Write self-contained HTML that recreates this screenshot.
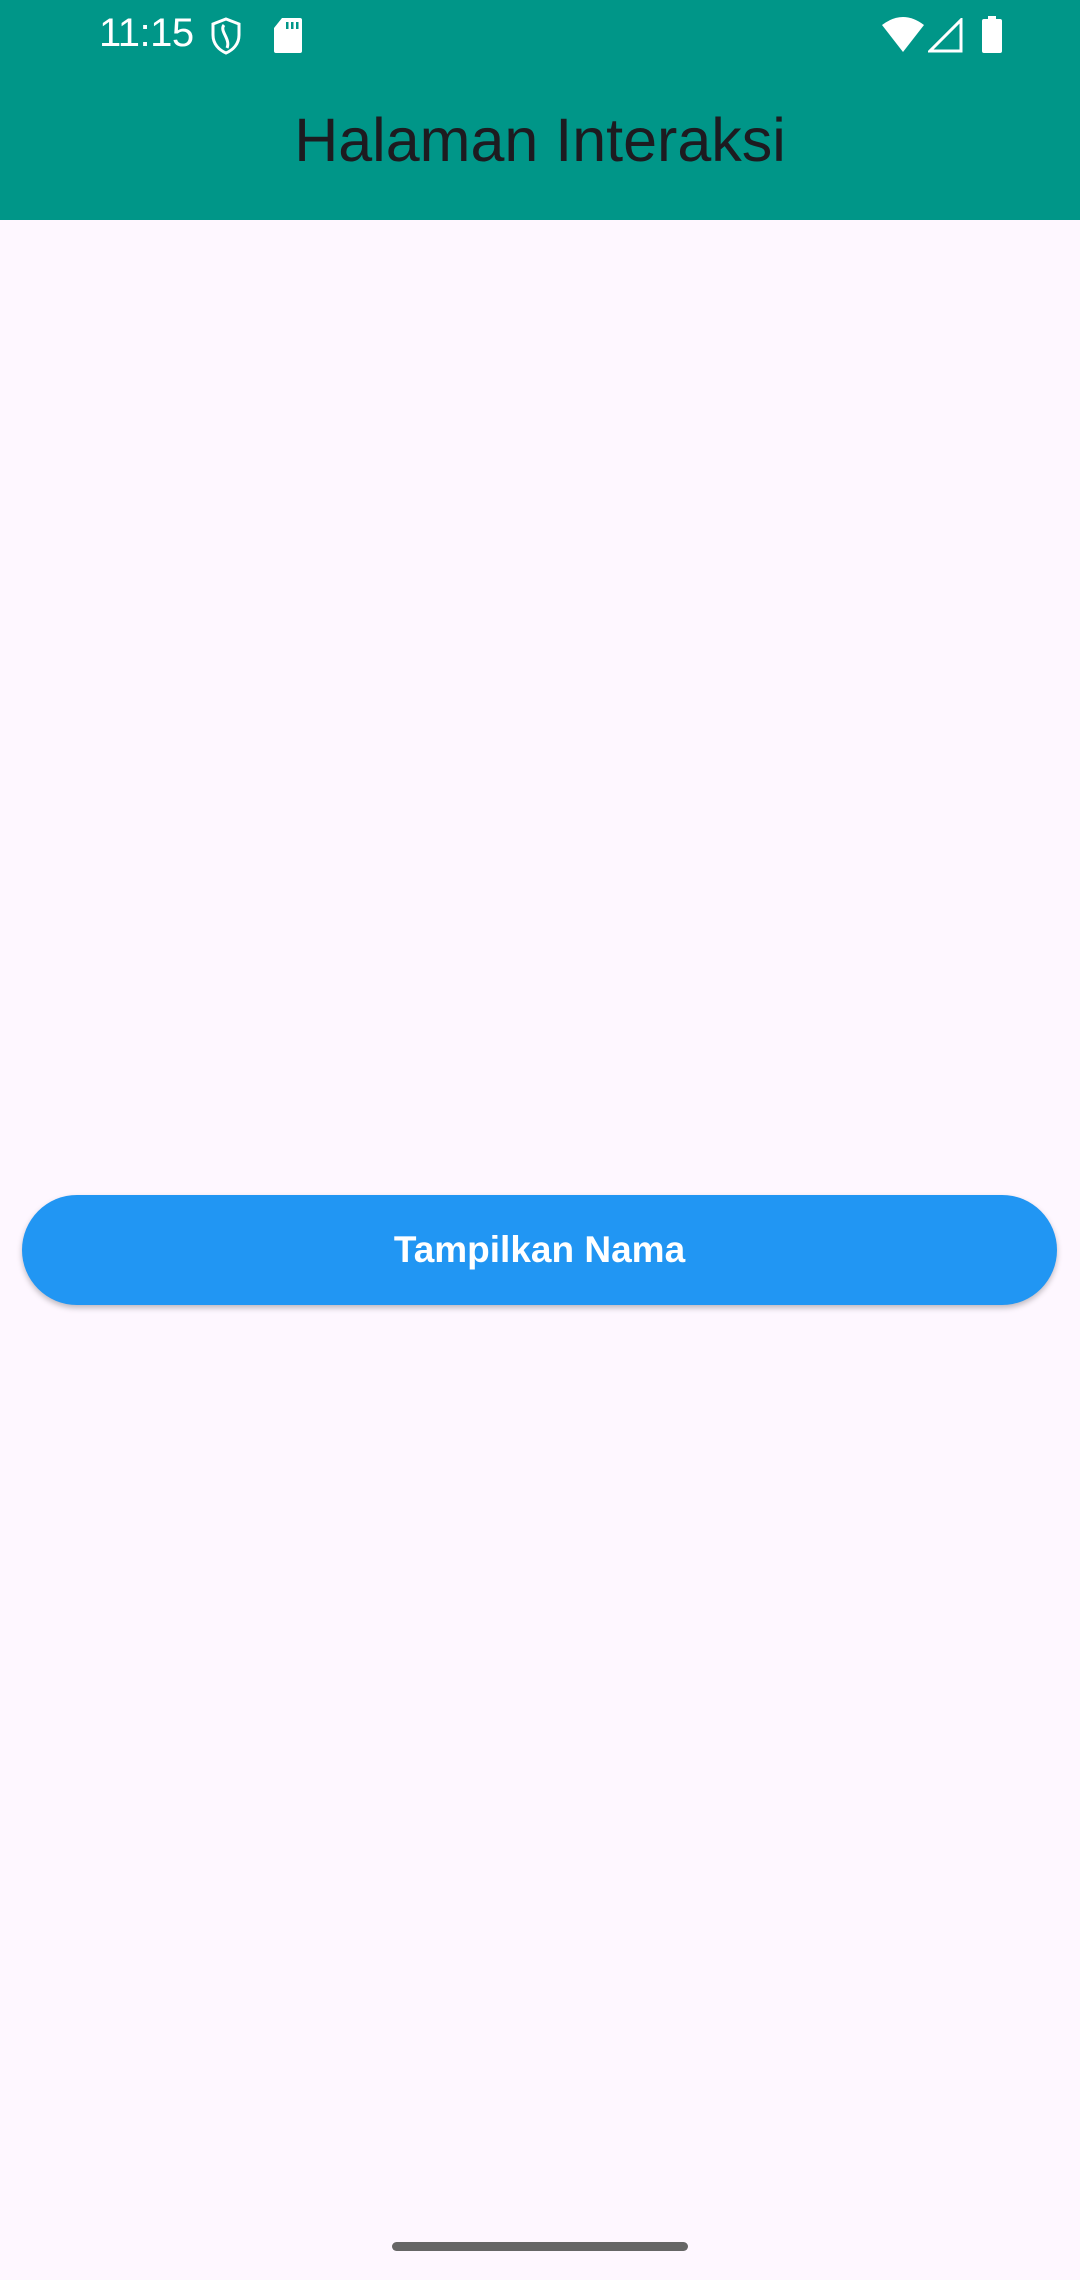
<!DOCTYPE html>
<html><head><meta charset="utf-8"><style>
html,body{margin:0;padding:0}
body{width:1080px;height:2280px;background:#FEF7FF;position:relative;overflow:hidden;font-family:"Liberation Sans",sans-serif}
.bar{position:absolute;left:0;top:0;width:1080px;height:220px;background:#009688}
.time{position:absolute;left:99px;top:11px;font-size:40px;color:#fff;letter-spacing:-0.5px}
.title{position:absolute;left:0;width:1080px;top:101px;text-align:center;font-size:61px;color:#1d1b20;line-height:78px}
.btn{position:absolute;left:22px;top:1195px;width:1035px;height:110px;border-radius:55px;background:#2196F3;box-shadow:0 3px 6px rgba(0,0,0,0.25);color:#fff;font-size:37px;font-weight:bold;text-align:center;line-height:110px}
.home{position:absolute;left:392px;top:2242px;width:296px;height:9px;border-radius:5px;background:#666}
svg{position:absolute}
</style></head><body>
<div class="bar"></div>
<div class="time">11:15</div>
<svg style="left:210px;top:17px" width="32" height="38" viewBox="0 0 32 38"><path d="M16 2 L29 7 V18 C29 27 23 33 16 36 C9 33 3 27 3 18 V7 Z" fill="none" stroke="#fff" stroke-width="3"/><path d="M14 8 C9 14 21 22 17 31" fill="none" stroke="#fff" stroke-width="3"/></svg>
<svg style="left:274px;top:18px" width="28" height="35" viewBox="0 0 28 35"><path d="M8 0 H26 Q28 0 28 2 V33 Q28 35 26 35 H2 Q0 35 0 33 V10 Z" fill="#fff"/><rect x="12" y="4" width="2.5" height="7" fill="#009688"/><rect x="17" y="4" width="2.5" height="7" fill="#009688"/><rect x="22" y="4" width="2.5" height="7" fill="#009688"/></svg>
<svg style="left:882px;top:17px" width="42" height="35" viewBox="0 0 42 35"><path d="M21 35 L0 8 Q21 -8 42 8 Z" fill="#fff"/></svg>
<svg style="left:928px;top:18px" width="35" height="35" viewBox="0 0 35 35"><path d="M33 2 V33 H2 Z" fill="none" stroke="#fff" stroke-width="3"/></svg>
<svg style="left:982px;top:16px" width="20" height="37" viewBox="0 0 20 37"><rect x="6" y="0" width="8" height="4" fill="#fff"/><rect x="0" y="3" width="20" height="34" rx="2" fill="#fff"/></svg>
<div class="title">Halaman Interaksi</div>
<div class="btn">Tampilkan Nama</div>
<div class="home"></div>
</body></html>
